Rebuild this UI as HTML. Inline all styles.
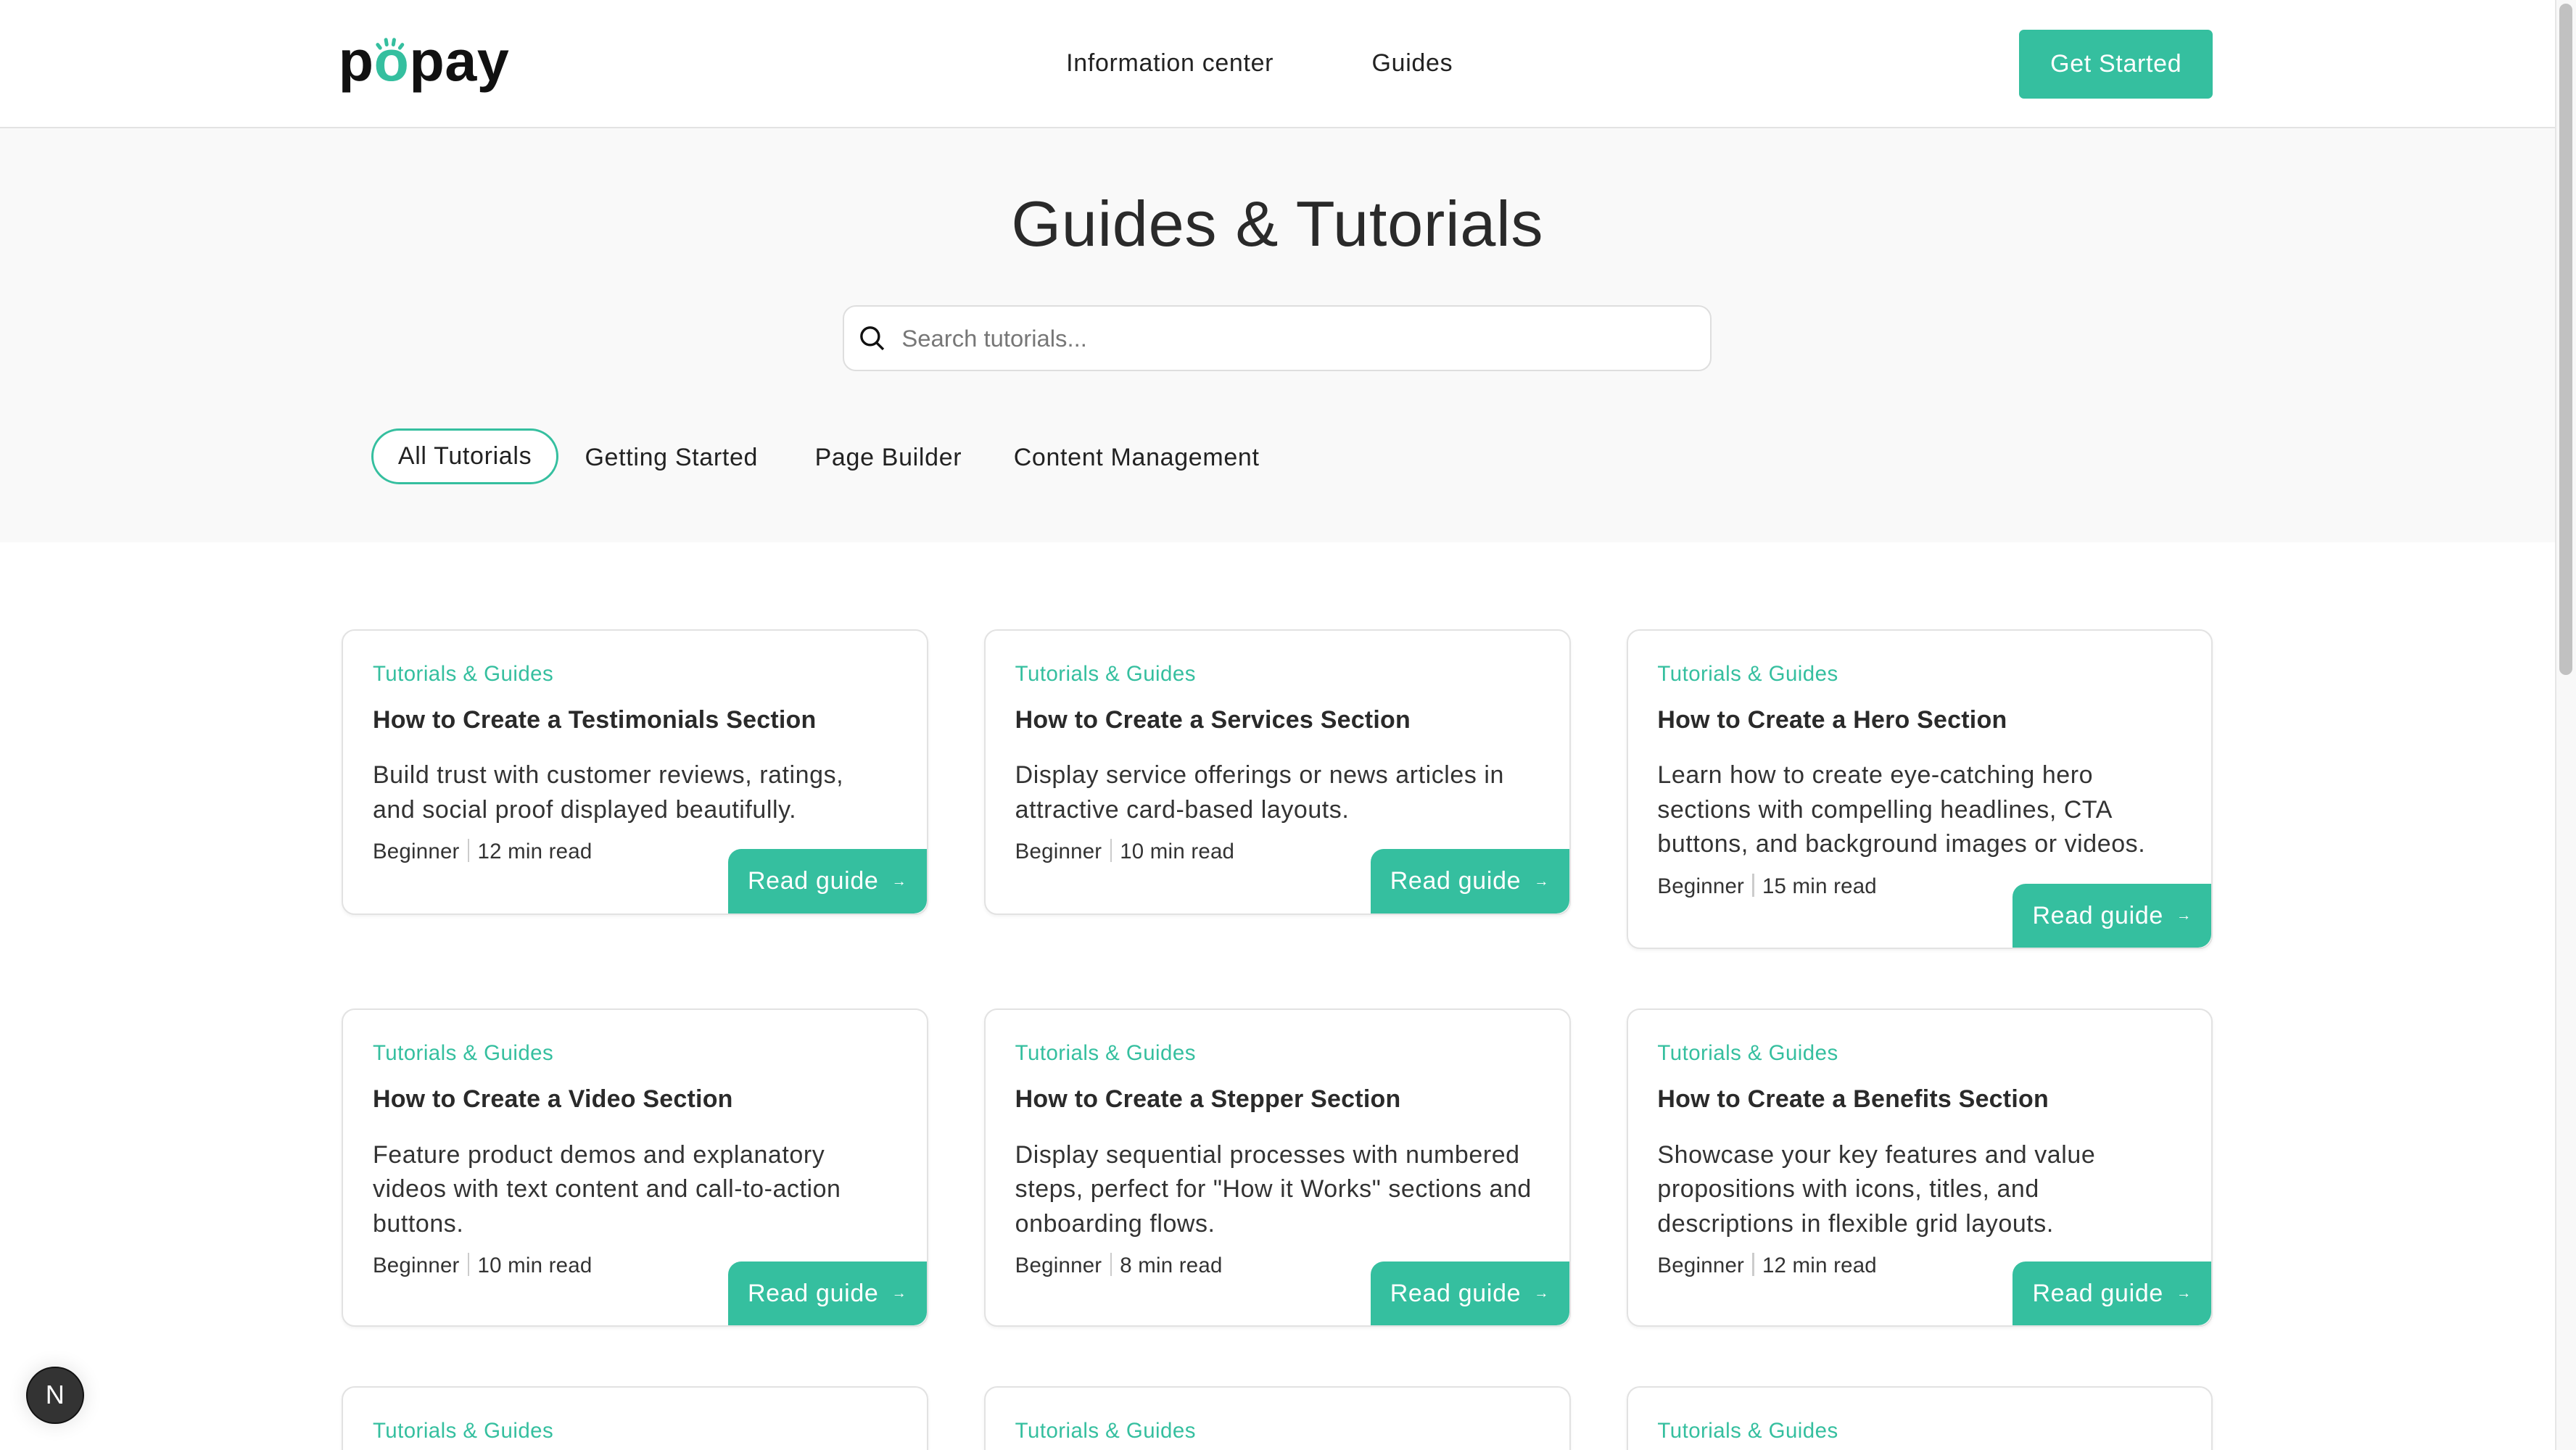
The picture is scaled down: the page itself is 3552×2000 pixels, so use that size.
<!DOCTYPE html>
<html><head><meta charset="utf-8"><style>
html{zoom:2.26531;overflow:hidden}
*{box-sizing:border-box;margin:0;padding:0}
body{width:1568px;height:883px;overflow:hidden;background:#fff;font-family:"Liberation Sans",sans-serif;color:#222}
#w{position:relative;width:1568px;height:883px;overflow:hidden}
.abs{position:absolute}
header{position:absolute;left:0;top:0;width:1555px;height:78px;border-bottom:1px solid #e3e3e3;background:#fff}
.hero{position:absolute;left:0;top:78px;width:1555px;height:252px;background:#f9f9f9}
.nav{font-size:15px;color:#222;top:30px;letter-spacing:.3px}
.btn{left:1229px;top:18px;width:118px;height:42px;background:#35bf9f;color:#fff;border-radius:3px;font-size:15px;display:flex;align-items:center;justify-content:center;letter-spacing:.3px}
h1{position:absolute;left:0;width:1555px;top:114px;text-align:center;font-weight:400;font-size:39px;color:#2a2a2a;letter-spacing:.3px}
.search{left:513px;top:186px;width:529px;height:40px;background:#fff;border:1px solid #dedede;border-radius:8px}
.search span{position:absolute;left:35px;top:11px;font-size:14.5px;color:#777}
.tab{top:270px;font-size:15px;color:#222;letter-spacing:.3px}
.pill{left:226px;top:261px;width:114px;height:34px;border:1.5px solid #35bf9f;border-radius:18px;background:#fff;font-size:15px;display:flex;align-items:center;justify-content:center;letter-spacing:.3px}
.card{position:absolute;width:357px;background:#fff;border:1px solid #e2e2e2;border-radius:8px;box-shadow:0 1px 2px rgba(0,0,0,.05);overflow:hidden}
.cut{border-bottom:none;border-radius:8px 8px 0 0}
.cat{position:absolute;left:18px;top:19px;font-size:13px;color:#35bf9f;letter-spacing:.2px}
.tt{position:absolute;left:18px;top:46px;font-size:15px;font-weight:700;color:#2a2a2a;letter-spacing:.1px}
.ds{position:absolute;left:18px;top:78px;white-space:nowrap;font-size:15px;line-height:21px;color:#333;letter-spacing:.25px}
.mt{position:absolute;left:18px;font-size:13px;color:#333;letter-spacing:.1px}
.mt i{display:inline-block;width:1px;height:14px;background:#ccc;margin:0 5px;vertical-align:-2px}
.rg{position:absolute;right:0;bottom:0;width:121px;height:39px;background:#35bf9f;color:#fff;border-radius:8px 0 8px 0;font-size:15px;padding:11px 0 0 12px;letter-spacing:.3px}
.rg small{font-size:9px;margin-left:8px;vertical-align:2px}
</style></head><body><div id="w">
<header>
<div class="abs" style="left:206px;top:17px;font-size:35px;font-weight:700;letter-spacing:.2px;color:#111;line-height:40px">p<span style="color:#35bf9f">o</span>pay</div>
<svg class="abs" style="left:227px;top:21px" width="22" height="10" viewBox="0 0 22 10"><g stroke="#35bf9f" stroke-width="2.2" stroke-linecap="round"><line x1="3" y1="6" x2="4.5" y2="8"/><line x1="8" y1="3" x2="8.5" y2="6"/><line x1="13" y1="3" x2="12.5" y2="6"/><line x1="18" y1="6" x2="16.5" y2="8"/></g></svg>
<div class="abs nav" style="left:649px">Information center</div>
<div class="abs nav" style="left:835px">Guides</div>
<div class="abs btn">Get Started</div>
</header>
<div class="hero"></div>
<h1>Guides &amp; Tutorials</h1>
<div class="abs search"><svg class="abs" style="left:9px;top:11px" width="17" height="17" viewBox="0 0 17 17"><circle cx="7" cy="7" r="5.3" fill="none" stroke="#111" stroke-width="1.5"/><line x1="11" y1="11" x2="15" y2="15" stroke="#111" stroke-width="1.5"/></svg><span>Search tutorials...</span></div>
<div class="abs pill">All Tutorials</div>
<div class="abs tab" style="left:356px">Getting Started</div>
<div class="abs tab" style="left:496px">Page Builder</div>
<div class="abs tab" style="left:617px">Content Management</div>

<div class="card" style="left:208px;top:383px;height:174px"><div class="cat">Tutorials &amp; Guides</div><div class="tt">How to Create a Testimonials Section</div><div class="ds">Build trust with customer reviews, ratings,<br>and social proof displayed beautifully.</div><div class="mt" style="top:127px">Beginner<i></i>12 min read</div><div class="rg">Read guide<small>→</small></div></div>
<div class="card" style="left:599px;top:383px;height:174px"><div class="cat">Tutorials &amp; Guides</div><div class="tt">How to Create a Services Section</div><div class="ds">Display service offerings or news articles in<br>attractive card-based layouts.</div><div class="mt" style="top:127px">Beginner<i></i>10 min read</div><div class="rg">Read guide<small>→</small></div></div>
<div class="card" style="left:990px;top:383px;height:195px"><div class="cat">Tutorials &amp; Guides</div><div class="tt">How to Create a Hero Section</div><div class="ds">Learn how to create eye-catching hero<br>sections with compelling headlines, CTA<br>buttons, and background images or videos.</div><div class="mt" style="top:148px">Beginner<i></i>15 min read</div><div class="rg">Read guide<small>→</small></div></div>

<div class="card" style="left:208px;top:614px;height:194px"><div class="cat">Tutorials &amp; Guides</div><div class="tt">How to Create a Video Section</div><div class="ds">Feature product demos and explanatory<br>videos with text content and call-to-action<br>buttons.</div><div class="mt" style="top:148px">Beginner<i></i>10 min read</div><div class="rg">Read guide<small>→</small></div></div>
<div class="card" style="left:599px;top:614px;height:194px"><div class="cat">Tutorials &amp; Guides</div><div class="tt">How to Create a Stepper Section</div><div class="ds">Display sequential processes with numbered<br>steps, perfect for "How it Works" sections and<br>onboarding flows.</div><div class="mt" style="top:148px">Beginner<i></i>8 min read</div><div class="rg">Read guide<small>→</small></div></div>
<div class="card" style="left:990px;top:614px;height:194px"><div class="cat">Tutorials &amp; Guides</div><div class="tt">How to Create a Benefits Section</div><div class="ds">Showcase your key features and value<br>propositions with icons, titles, and<br>descriptions in flexible grid layouts.</div><div class="mt" style="top:148px">Beginner<i></i>12 min read</div><div class="rg">Read guide<small>→</small></div></div>

<div class="card cut" style="left:208px;top:844px;height:39px"><div class="cat">Tutorials &amp; Guides</div></div>
<div class="card cut" style="left:599px;top:844px;height:39px"><div class="cat">Tutorials &amp; Guides</div></div>
<div class="card cut" style="left:990px;top:844px;height:39px"><div class="cat">Tutorials &amp; Guides</div></div>

<div class="abs" style="left:16px;top:832px;width:35px;height:35px;border-radius:50%;background:#333;border:1px solid #111;box-shadow:0 0 12px rgba(0,0,0,.12);color:#fff;font-size:16px;display:flex;align-items:center;justify-content:center">N</div>
<div class="abs" style="left:1555px;top:0;width:13px;height:883px;background:#f8f8f8;border-left:1px solid #e6e6e6"></div>
<div class="abs" style="left:1558px;top:2px;width:8px;height:409px;background:#c1c1c1;border-radius:4px"></div>
</div></body></html>
